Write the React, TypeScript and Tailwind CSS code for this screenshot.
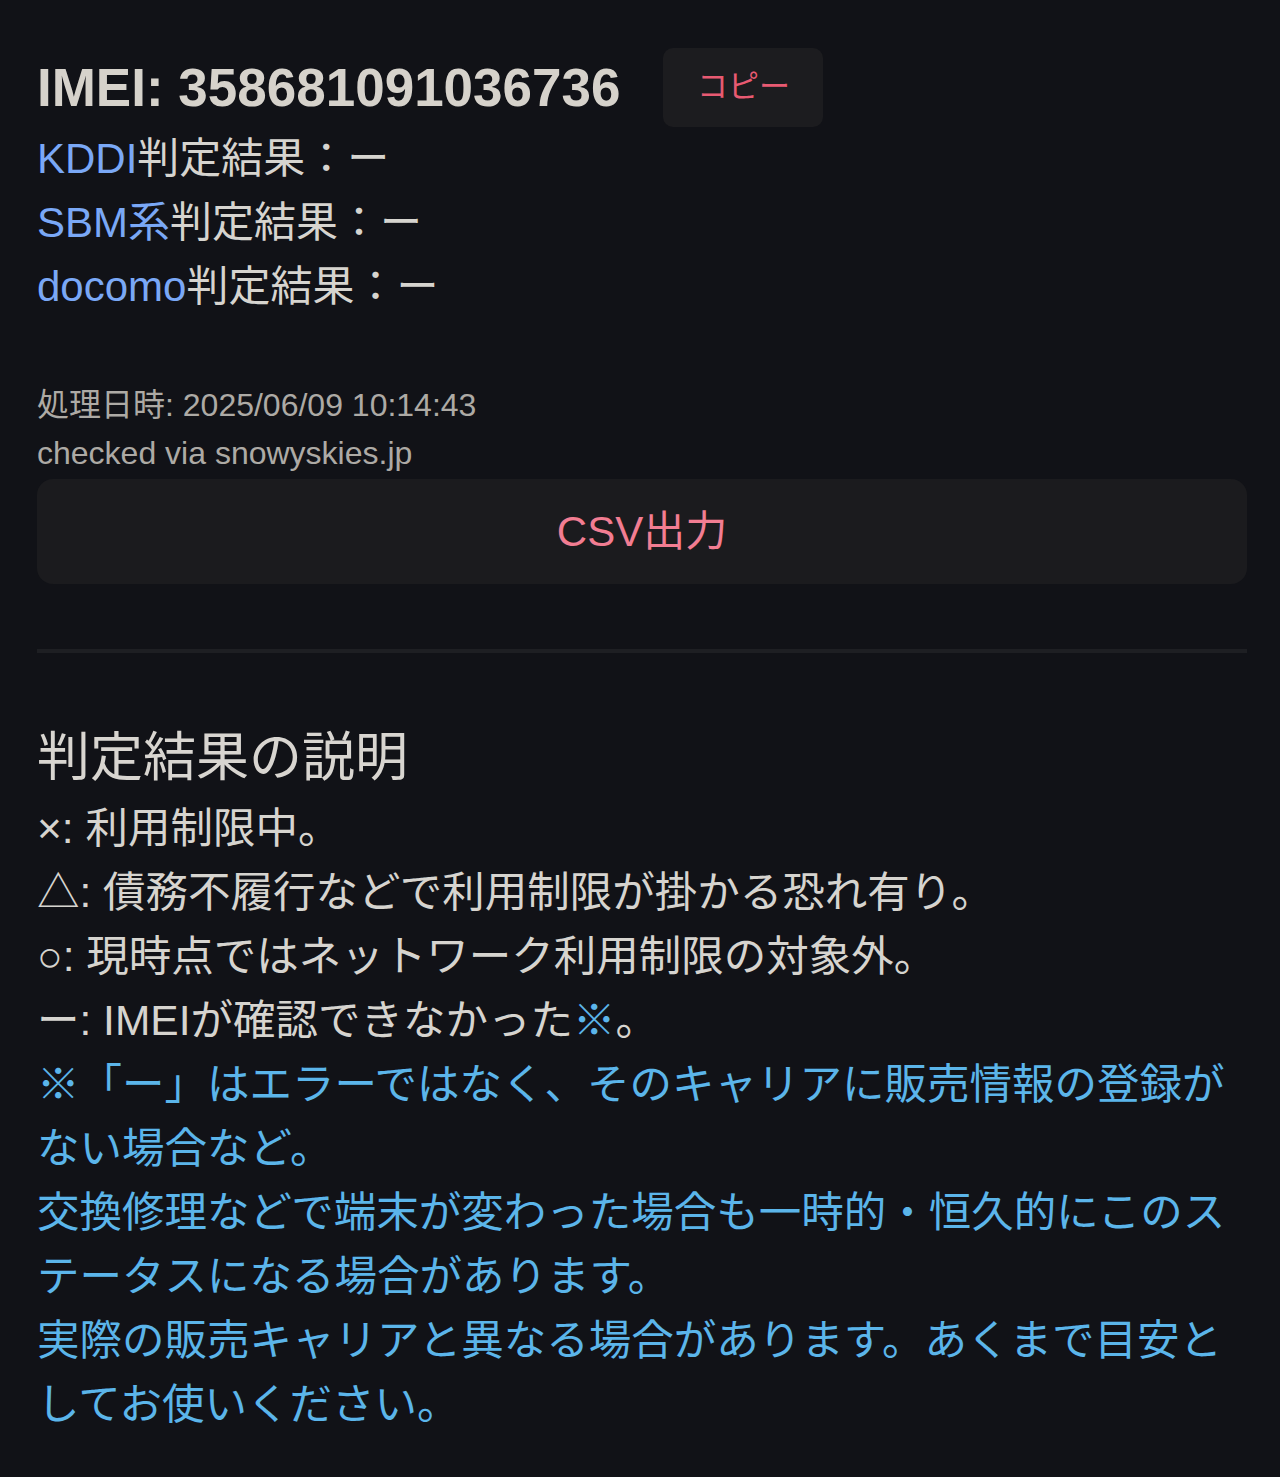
import React from 'react'

const font = { fontFamily: "'Liberation Sans', 'Noto Sans CJK JP', sans-serif" }

type Row = { carrier: string }

const carriers: Row[] = [{ carrier: 'KDDI' }, { carrier: 'SBM系' }, { carrier: 'docomo' }]

export default function App() {
  return (
    <div style={font} className="min-h-screen bg-[#111217] pl-[37px] pr-[33px] pt-[48px] text-[#d6d4cf]">
      <div className="flex h-[79px] items-center gap-[43px]">
        <h1 className="text-[53px] font-bold leading-none text-[#d6d2cb]">IMEI: 358681091036736</h1>
        <button className="flex h-[79px] w-[160px] items-center justify-center rounded-[10px] bg-[#1c1c1f] text-[31px] text-[#e85a72]">
          コピー
        </button>
      </div>

      <div className="text-[42px] leading-[64px]">
        {carriers.map((c) => (
          <div key={c.carrier}>
            <span className="text-[#7aa8f6]">{c.carrier}</span>
            判定結果：ー
          </div>
        ))}
      </div>

      <div className="mt-[62px] text-[32px] leading-[48px] text-[#adaaa5]">
        <div>処理日時: 2025/06/09 10:14:43</div>
        <div>checked via snowyskies.jp</div>
      </div>

      <button className="mt-[2px] flex h-[105px] w-full items-center justify-center rounded-2xl bg-[#1b1b1e] text-[42px] text-[#f27d92]">
        CSV出力
      </button>

      <div className="mt-[65px] h-[4px] w-full bg-[#1e1f23]" />

      <h2 className="mt-[66px] text-[53px] font-normal leading-[78px] text-[#d8d5d0]">判定結果の説明</h2>
      <div className="text-[42.5px] leading-[64px]">
        <div>×: 利用制限中。</div>
        <div>△: 債務不履行などで利用制限が掛かる恐れ有り。</div>
        <div>○: 現時点ではネットワーク利用制限の対象外。</div>
        <div>
          ー: IMEIが確認できなかった<span className="text-[#5bb5ea]">※</span>。
        </div>
        <div className="text-[#5bb5ea]">
          <p>※「ー」はエラーではなく、そのキャリアに販売情報の登録がない場合など。</p>
          <p>交換修理などで端末が変わった場合も一時的・恒久的にこのステータスになる場合があります。</p>
          <p>実際の販売キャリアと異なる場合があります。あくまで目安としてお使いください。</p>
        </div>
      </div>
    </div>
  )
}
